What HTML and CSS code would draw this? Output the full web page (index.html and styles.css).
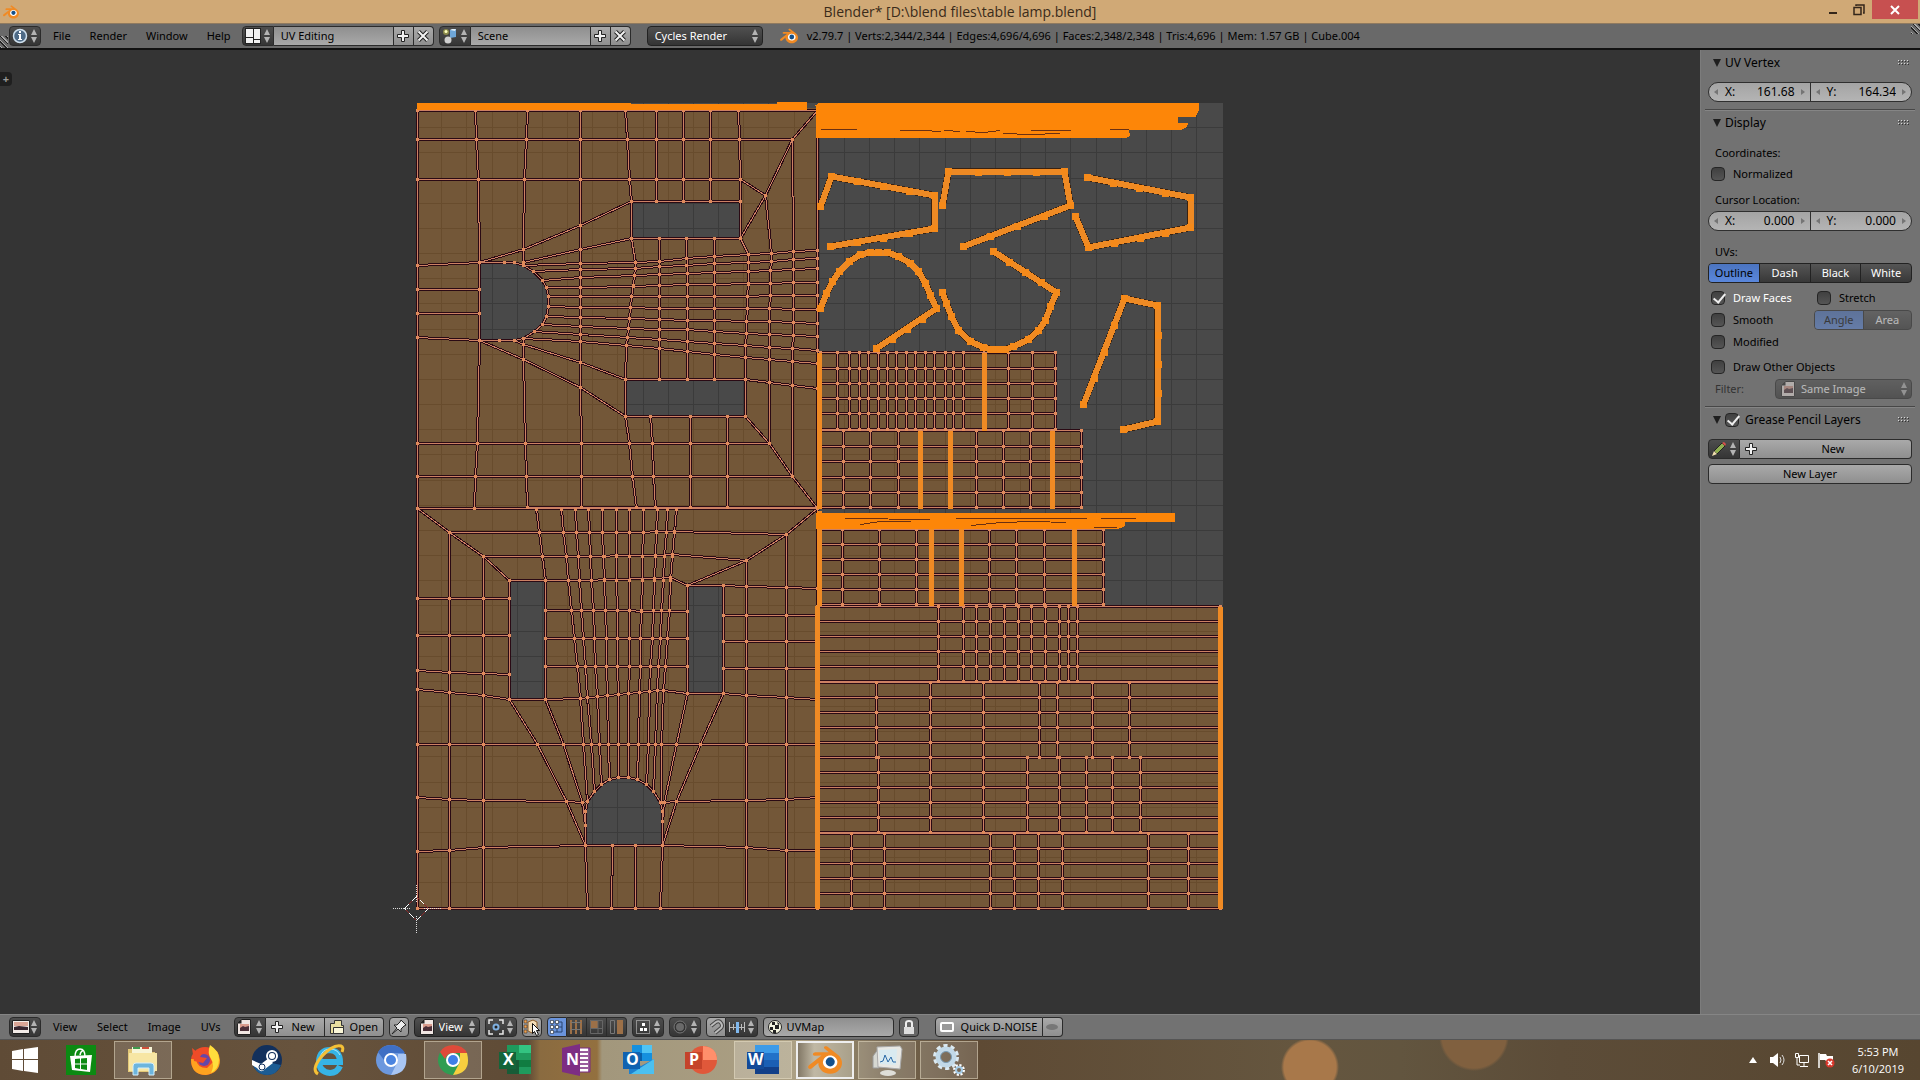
FILE: index.html
```html
<!DOCTYPE html>
<html lang="en">
<head>
  <meta charset="UTF-8">
  <title>Blender* [D:\blend files\table lamp.blend]</title>
  <meta name="viewport" content="width=device-width, initial-scale=1.0">
  <link rel="stylesheet" href="styles.css">
</head>
<body>

  <!-- Shared icons -->
  <svg class="defs" aria-hidden="true">
    <symbol id="blender" viewBox="0 0 24 24">
      <circle cx="15.700" cy="13.500" r="6" fill="#fff"/>
      <circle cx="15.700" cy="13.300" r="3.200" fill="#15508a"/>
      <path fill="#f08a24" d="M7.350 14.831c.006.314.106.922.256 1.398a7.372 7.372 0 0 0 1.593 2.757 8.227 8.227 0 0 0 2.787 2.001 8.947 8.947 0 0 0 3.660.760 8.964 8.964 0 0 0 3.657-.772 8.285 8.285 0 0 0 2.785-2.010 7.428 7.428 0 0 0 1.592-2.762 6.964 6.964 0 0 0 .250-3.074 7.123 7.123 0 0 0-1.016-2.779 7.764 7.764 0 0 0-1.852-2.043L13.566 2.550c-.492-.378-1.319-.376-1.860.002-.547.382-.609 1.015-.123 1.415l3.126 2.543-9.530.010c-.788.001-1.545.518-1.695 1.172-.154.665.380 1.217 1.200 1.220l4.830-.010-8.620 6.617c-.813.622-1.075 1.658-.563 2.315.520.667 1.625.668 2.447.004L7.414 14s-.069.520-.063.831zm12.090 1.741c-.970.988-2.326 1.548-3.795 1.550-1.470.004-2.827-.552-3.797-1.538a4.510 4.510 0 0 1-1.036-1.622 4.282 4.282 0 0 1 .282-3.519 4.702 4.702 0 0 1 1.153-1.371c.942-.768 2.141-1.183 3.396-1.185 1.256-.002 2.455.410 3.398 1.175.480.391.870.854 1.152 1.367a4.280 4.280 0 0 1 .522 1.706 4.236 4.236 0 0 1-.239 1.811 4.540 4.540 0 0 1-1.035 1.626"/>
    </symbol>
    <symbol id="updown" viewBox="0 0 8 16">
      <path fill="#b4b4b4" d="M4 1 L7 7 H1Z M4 15 L1 9 H7Z"/>
    </symbol>
    <symbol id="plus" viewBox="0 0 14 14">
      <path fill="#f2f2f2" stroke="#222" d="M5.500 1.500h3v4h4v3h-4v4h-3v-4h-4v-3h4z"/>
    </symbol>
    <symbol id="cross" viewBox="0 0 14 14">
      <path fill="none" stroke="#222" stroke-width="4" d="M2.500 2.500l9 9m0-9l-9 9"/>
      <path fill="none" stroke="#f2f2f2" stroke-width="2" d="M2.500 2.500l9 9m0-9l-9 9"/>
    </symbol>
    <symbol id="image" viewBox="0 0 14 16">
      <path fill="#f0e6e2" stroke="#222" d="M4.500 .5h9v15h-13v-11z"/>
      <path fill="#d99b8c" d="M3 5h9v4H3z"/>
      <path fill="#4b2f38" d="M3 9l3-2 2 1 4-1v5H3z"/>
      <path fill="#222" d="M.5 4.500h4v-4z"/>
    </symbol>
    <symbol id="grip" viewBox="0 0 12 6">
      <path stroke="#d8d8d8" stroke-dasharray="1 2" d="M0 .5h12M0 3.500h12"/>
      <path stroke="#333" stroke-dasharray="1 2" d="M1 1.500h11M1 4.500h11"/>
    </symbol>
  </svg>

  <header class="titlebar">
    <svg class="title-icon"><use href="#blender"/></svg>
    <h1>Blender* [D:\blend files\table lamp.blend]</h1>
    <div class="window-buttons">
      <button aria-label="Minimize"><svg width="12" height="12"><path stroke="#33261a" stroke-width="2" d="M2 9h8"/></svg></button>
      <button aria-label="Restore"><svg width="12" height="12"><path fill="none" stroke="#33261a" stroke-width="1.500" d="M3 2V1h8v8h-1M1 3.500h7v7H1z"/></svg></button>
      <button class="close" aria-label="Close"><svg width="10" height="10"><path stroke="#fff" stroke-width="2" d="M1 1l8 8m0-8l-8 8"/></svg></button>
    </div>
  </header>

  <nav class="bar top-bar">
    <button class="menu-btn dark" aria-label="Editor type">
      <svg width="16" height="16"><circle cx="8" cy="8" r="6.500" fill="#4e6a86" stroke="#cfe0ee" stroke-width="1.500"/><path fill="#fff" d="M7 3h2v2H7zM6 6h3v5h1v1H6v-1h1V7H6z"/></svg>
      <svg class="ud"><use href="#updown"/></svg>
    </button>
    <div class="menus">
      <a href="#file">File</a><a href="#render">Render</a><a href="#window">Window</a><a href="#help">Help</a>
    </div>
    <div class="group">
      <button class="menu-btn dark" aria-label="Screen layout">
        <svg width="16" height="16"><path fill="#222" d="M0 0h16v16H0z"/><path fill="#f2f2f2" d="M1 1h7v8H1zM9 1h6v10H9zM1 10h7v5H1zM9 12h6v3H9z"/></svg>
        <svg class="ud"><use href="#updown"/></svg>
      </button>
      <input class="name" aria-label="Screen" value="UV Editing">
      <button class="sq" aria-label="Add screen"><svg class="i14"><use href="#plus"/></svg></button>
      <button class="sq" aria-label="Delete screen"><svg class="i14"><use href="#cross"/></svg></button>
    </div>
    <div class="group">
      <button class="menu-btn dark" aria-label="Browse scene">
        <svg width="16" height="16"><path fill="#6ea6d8" d="M8 2l6-1v8l-6 1z"/><path fill="#dcecf8" d="M8 2l2-1h4l-1 2z"/><circle cx="4" cy="4" r="3" fill="#8b8a4a"/><circle cx="4" cy="3.500" r="1.500" fill="#ffffc0"/><circle cx="6" cy="12" r="3.500" fill="#d0d0d0"/></svg>
        <svg class="ud"><use href="#updown"/></svg>
      </button>
      <input class="name" aria-label="Scene" value="Scene">
      <button class="sq" aria-label="Add scene"><svg class="i14"><use href="#plus"/></svg></button>
      <button class="sq" aria-label="Delete scene"><svg class="i14"><use href="#cross"/></svg></button>
    </div>
    <div class="drop engine">
      <select aria-label="Render engine"><option>Cycles Render</option></select>
      <svg class="ud"><use href="#updown"/></svg>
    </div>
    <p class="stats"><svg class="i18"><use href="#blender"/></svg>v2.79.7 | Verts:2,344/2,344 | Edges:4,696/4,696 | Faces:2,348/2,348 | Tris:4,696 | Mem: 1.57 GB | Cube.004</p>
  </nav>

  <main class="workspace">
    <section class="canvas" aria-label="UV editor">
      <button class="expand" aria-label="Show tool shelf">+</button>
      <svg id="uv" class="uv"></svg>
    </section>

    <aside class="sidebar">
      <section class="panel">
        <h2><span class="tri"></span>UV Vertex<svg class="grip"><use href="#grip"/></svg></h2>
        <div class="numbers">
          <div class="num"><label for="vx">X:</label><input id="vx" value="161.68"></div>
          <div class="num"><label for="vy">Y:</label><input id="vy" value="164.34"></div>
        </div>
      </section>

      <section class="panel">
        <h2><span class="tri"></span>Display<svg class="grip"><use href="#grip"/></svg></h2>
        <p class="caption first">Coordinates:</p>
        <div class="row"><label class="check"><input type="checkbox">Normalized</label></div>
        <p class="caption">Cursor Location:</p>
        <div class="numbers tight">
          <div class="num"><label for="cx">X:</label><input id="cx" value="0.000"></div>
          <div class="num"><label for="cy">Y:</label><input id="cy" value="0.000"></div>
        </div>
        <p class="caption uvs">UVs:</p>
        <div class="toggle">
          <button class="on">Outline</button><button>Dash</button><button>Black</button><button>White</button>
        </div>
        <div class="checks">
          <label class="check lit"><input type="checkbox" checked>Draw Faces</label>
          <label class="check"><input type="checkbox">Stretch</label>
          <label class="check"><input type="checkbox">Smooth</label>
          <div class="toggle faded"><button class="on" disabled>Angle</button><button disabled>Area</button></div>
          <label class="check"><input type="checkbox">Modified</label>
        </div>
        <div class="row other"><label class="check"><input type="checkbox">Draw Other Objects</label></div>
        <div class="filter">
          <label for="filter">Filter:</label>
          <div class="drop faded">
            <svg width="14" height="16"><use href="#image"/></svg>
            <select id="filter" disabled><option>Same Image</option></select>
            <svg class="ud"><use href="#updown"/></svg>
          </div>
        </div>
      </section>

      <section class="panel">
        <h2><span class="tri"></span><input type="checkbox" checked id="grease"><label for="grease">Grease Pencil Layers</label><svg class="grip"><use href="#grip"/></svg></h2>
        <div class="group">
          <button class="menu-btn dark" aria-label="Browse grease pencil">
            <svg width="16" height="16"><path fill="#8fae50" stroke="#222" d="M3 10L11 2l3 3-8 8z"/><path fill="#d8524a" d="M11 2l2-1 2 2-1 2z"/><path fill="#f3e0b0" d="M1 15l2-5 3 3z"/></svg>
            <svg class="ud"><use href="#updown"/></svg>
          </button>
          <button class="wide"><svg class="i14"><use href="#plus"/></svg><span>New</span></button>
        </div>
        <button class="layer">New Layer</button>
      </section>
    </aside>
  </main>

  <nav class="bar bottom-bar">
    <button class="menu-btn dark" aria-label="Editor type">
      <svg width="18" height="16"><path fill="#f3ece8" stroke="#222" d="M.5 1.500h17v13H.5z"/><path fill="#dba596" d="M2 3h14v4H2z"/><path fill="#3a2730" d="M2 8l5-1 9 1v3H2z"/></svg>
      <svg class="ud"><use href="#updown"/></svg>
    </button>
    <div class="menus">
      <a href="#view">View</a><a href="#select">Select</a><a href="#image-menu">Image</a><a href="#uvs">UVs</a>
    </div>
    <div class="group">
      <button class="menu-btn dark" aria-label="Browse image"><svg width="14" height="16"><use href="#image"/></svg><svg class="ud"><use href="#updown"/></svg></button>
      <button class="new"><svg class="i14"><use href="#plus"/></svg>New</button>
      <button class="open"><svg width="16" height="16"><path fill="#e9dfa0" stroke="#333" d="M1.500 4.500h4v-3h7v5h2v8h-13z"/><path fill="#fbf7d8" stroke="#333" d="M4.500 8.500h10v6h-10z"/></svg>Open</button>
    </div>
    <button class="sq alone" aria-label="Pin"><svg width="16" height="16"><path fill="#eee" stroke="#222" d="M10 1l5 5-2 1-3 3v3l-3-3-6 5 5-6-3-3h3l3-3z"/></svg></button>
    <div class="drop view">
      <svg width="14" height="16"><use href="#image"/></svg>
      <select aria-label="Mode"><option>View</option></select>
      <svg class="ud"><use href="#updown"/></svg>
    </div>
    <button class="menu-btn dark" aria-label="Pivot"><svg width="16" height="16"><path fill="none" stroke="#e8e8e8" stroke-width="1.500" d="M1 5V1h4M11 1h4v4M15 11v4h-4M5 15H1v-4"/><circle cx="8" cy="8" r="2.500" fill="#222" stroke="#7fb0e0" stroke-width="2"/></svg><svg class="ud"><use href="#updown"/></svg></button>
    <button class="sq alone" aria-label="Sync selection"><svg width="18" height="18"><path fill="#f3ddb8" stroke="#8a5a28" d="M5 4l5-2 4 2v9l-5 2-4-2z"/><path fill="#f0a050" stroke="#222" stroke-width=".5" d="M1 2h3v3H1zM1 7h3v3H1zM1 12h3v3H1z"/><path fill="#fff" stroke="#111" d="M9.500 5.500v10l2-2 2 4 2-1-2-4h3z"/></svg></button>
    <div class="group modes">
      <button class="sq on" aria-label="Vertex"><svg width="16" height="16"><path fill="none" stroke="#26426e" d="M3 3h10v10H3zM8 3v10M3 8h10"/><path fill="#fff" stroke="#111" stroke-width=".5" d="M1.500 1.500h3v3h-3zM6.500 1.500h3v3h-3zM6.500 6.500h3v3h-3zM1.500 6.500h3v3h-3zM1.500 11.500h3v3h-3z"/></svg></button>
      <button class="sq dark" aria-label="Edge"><svg width="16" height="16"><path fill="none" stroke="#9c7048" stroke-width="2" d="M3 1v14M8 1v14M13 1v14"/><path stroke="#777" d="M3 3.500h10M3 10.500h10"/></svg></button>
      <button class="sq dark" aria-label="Face"><svg width="16" height="16"><path fill="#9c7048" d="M2 1h8v8H2z"/><path fill="none" stroke="#666" d="M2.500 1.500h12v13h-12zM10 1v13M2 9.500h12"/></svg></button>
      <button class="sq dark" aria-label="Island"><svg width="16" height="16"><path fill="#9c7048" d="M9 1h6v14H9z"/><path fill="none" stroke="#777" d="M2.500 1.500h4v13h-4z"/></svg></button>
    </div>
    <button class="menu-btn dark" aria-label="Sticky selection"><svg width="16" height="16"><path fill="none" stroke="#ddd" stroke-dasharray="1 1" d="M1.500 1.500h13v13h-13z"/><path fill="#fff" d="M7 4h3v3H7zM5 9h3v3H5zM9 9h3v3H9z"/></svg><svg class="ud"><use href="#updown"/></svg></button>
    <button class="menu-btn dark" aria-label="Proportional editing"><svg width="16" height="16"><circle cx="8" cy="8" r="5" fill="#6a6a6a" stroke="#333" stroke-width="2"/><circle cx="8" cy="8" r="6" fill="none" stroke="#777"/></svg><svg class="ud"><use href="#updown"/></svg></button>
    <div class="group">
      <button class="sq" aria-label="Snap"><svg width="16" height="16"><path fill="none" stroke="#444" stroke-width="4" d="M3 7l5-4q3-2 5 1t0 5l-6 5"/><path fill="none" stroke="#bbb" stroke-width="2" d="M3 7l5-4q3-2 5 1t0 5l-6 5"/></svg></button>
      <button class="menu-btn dark" aria-label="Snap element"><svg width="18" height="16"><path stroke="#bbb" d="M1.500 3v10M5.500 5v6M13.500 5v6M16.500 3v10M1 8.500h16"/><path fill="#7fb8ee" d="M8 3h3v11H8z"/></svg><svg class="ud"><use href="#updown"/></svg></button>
    </div>
    <div class="uvmap">
      <svg width="16" height="16"><circle cx="8" cy="8" r="6.500" fill="#f5f5e0" stroke="#222"/><path fill="#222" d="M5 3h3v3H5zM8 6h4v4H8zM3 8h3v3H3zM6 11h3v3H6zM10 3l3 2-2 1z"/></svg>
      <input aria-label="UV map" value="UVMap">
    </div>
    <button class="sq alone lock" aria-label="Lock"><svg width="14" height="16"><path fill="none" stroke="#eee" stroke-width="2" d="M4 8V4q0-2 3-2t3 2v4"/><path fill="#ddd" d="M2 8h10v7H2z"/></svg></button>
    <div class="group denoise">
      <button class="quick"><svg width="16" height="16"><rect x="2" y="4" width="12" height="8" rx="1" fill="#999" stroke="#fff" stroke-width="2"/></svg>Quick D-NOISE</button>
      <button class="sq" aria-label="Options"><svg width="16" height="12"><ellipse cx="8" cy="6" rx="6" ry="3" fill="#777"/></svg></button>
    </div>
  </nav>

  <footer class="taskbar">
    <button class="task start" aria-label="Start"><svg width="26" height="26"><path fill="#fff" d="M0 4l11-2v10H0zM12 2l14-2v12H12zM0 13h11v11L0 22zM12 13h14v13l-14-2z"/></svg></button>
    <button class="task" aria-label="Store"><svg width="30" height="30"><path fill="#0c8a12" d="M0 0h30v30H0z"/><path fill="none" stroke="#fff" stroke-width="1.500" d="M9 12q0-8 5-8t5 8M14 10q1-5 4-4"/><path fill="#fff" d="M4 11l22-1-2 17-18-2z"/><path fill="#0c8a12" d="M9 14l5-.5v5H9zM15 13.500l6-.5v5.500h-6zM9 19.500h5v4.500l-5-1zM15 19.500h6v5.500l-6-1z"/></svg></button>
    <button class="task open-task" aria-label="File Explorer"><svg width="32" height="32"><path fill="#e3c878" d="M1 5h9l2 3h16v20H1z"/><path fill="#f8f5d8" d="M5 3h20v6H5z"/><path stroke="#d0503a" stroke-width="2" d="M15 4h7"/><path stroke="#3f9a4d" stroke-width="2" d="M6 4h7"/><path fill="#f7e6a4" d="M2 9h28v18H2z"/><path fill="#6db5dd" stroke="#d5effb" d="M6 31V22q0-3 3-3h15q3 0 3 3v9h-5v-7H11v7z"/></svg></button>
    <button class="task" aria-label="Firefox"><svg width="32" height="32"><circle cx="16" cy="17" r="14" fill="#ef4b28"/><path fill="#ffa21f" d="M2 15q0 16 15 16 14-2 14-15-1-10-10-14 2 4 0 7l4 8-7 7q-10 0-11-9z"/><path fill="#ffde3c" d="M21 1q9 6 9 14 0 10-8 14 4-8 0-14-4-6-1-14z"/><circle cx="15" cy="16" r="6" fill="#6547a8"/><path fill="#ef4b28" d="M3 4l5 4h6l-3 5 7 1-4 5-9-2z"/></svg></button>
    <button class="task" aria-label="Steam"><svg width="32" height="32"><circle cx="16" cy="16" r="15" fill="#12305c"/><path fill="#1c5c93" d="M2 21q14-4 28 0-4 10-14 10T2 21z"/><path fill="#fff" d="M1 16l9 4 8-6 4 5-8 6q-4 5-8-1l-5-3z"/><circle cx="21" cy="12" r="6" fill="#fff"/><circle cx="21" cy="12" r="4" fill="#12305c"/><circle cx="21" cy="12" r="3" fill="#fff"/><circle cx="11" cy="23" r="3" fill="none" stroke="#12305c"/></svg></button>
    <button class="task" aria-label="Internet Explorer"><svg width="32" height="32"><path fill="none" stroke="#36b4e5" stroke-width="6" d="M27 22q-3 7-10 7-11-1-11-12Q7 6 17 6q10 1 10 12H9"/><path fill="none" stroke="#b5e8fa" stroke-width="1" d="M7 14q2-9 10-9 7 0 10 6"/><path fill="none" stroke="#f5c036" stroke-width="3" d="M5 30Q-2 26 8 13 20 0 28 2q3 1 1 6"/></svg></button>
    <button class="task" aria-label="Chromium"><svg width="32" height="32"><circle cx="16" cy="16" r="15" fill="#6c98de"/><path fill="#3f6fc4" d="M3 8q4-7 13-7 9 0 14 8H16q-6 0-7 7z"/><path fill="#a9c6f3" d="M31 10q3 20-15 21l7-14V10z"/><circle cx="16" cy="16" r="7" fill="#fff"/><circle cx="16" cy="16" r="5" fill="#4a84e0"/></svg></button>
    <button class="task open-task" aria-label="Chrome"><svg width="32" height="32"><circle cx="16" cy="16" r="15" fill="#2f9d52"/><path fill="#df4a3a" d="M3 8q4-7 13-7 10 0 14 8H16q-6 0-8 6z"/><path fill="#f8cf3f" d="M30 9q5 20-14 22l7-13V9z"/><circle cx="16" cy="16" r="7" fill="#fff"/><circle cx="16" cy="16" r="5" fill="#3f7fe8"/></svg></button>
    <button class="task" aria-label="Excel"><svg width="34" height="30"><path fill="#1f9a5d" d="M9 0h24v29H9z"/><path fill="#33c481" d="M21 0h12v8H21z"/><path fill="#185c37" d="M9 15h12v14H9z"/><path fill="#107c41" d="M21 15h12v7H21z"/><path fill="#14643a" d="M1 7h17v17H1z"/><text x="5" y="20">X</text></svg></button>
    <button class="task" aria-label="OneNote"><svg width="32" height="32"><path fill="#fff" stroke="#7a2a80" d="M18 4h11v24H18z"/><path stroke="#7a2a80" stroke-width="1.500" d="M18 8h9M18 12h9M18 16h9M18 20h9M18 24h9M28 4v24"/><path fill="#7d2d83" d="M1 4l18-4v32L1 28z"/><text x="5" y="21">N</text></svg></button>
    <button class="task" aria-label="Outlook"><svg width="34" height="30"><path fill="#1590df" d="M10 0h20v16H10z"/><path fill="#50c4f4" d="M20 0h10v8H20z"/><path fill="#0a5ea8" d="M10 8h10v8H10z"/><path fill="#1d80cf" d="M7 14l12 7 13-7v15H7z"/><path fill="#4cc0f0" d="M32 14v15H9z"/><path fill="#0f62b0" d="M1 7h17v17H1z"/><text x="4" y="20">O</text></svg></button>
    <button class="task" aria-label="PowerPoint"><svg width="34" height="32"><circle cx="19" cy="16" r="14" fill="#e0583a"/><path fill="#ff8f6b" d="M19 2q14 1 14 14H19z"/><path fill="#c5432a" d="M1 8h17v17H1z"/><text x="5" y="21">P</text></svg></button>
    <button class="task open-task light" aria-label="Word"><svg width="34" height="30"><path fill="#3c9be8" d="M9 0h24v8H9z"/><path fill="#2272c8" d="M9 8h24v7H9z"/><path fill="#1b5fb4" d="M9 15h24v7H9z"/><path fill="#123f88" d="M9 22h24v7H9z"/><path fill="#134a98" d="M1 7h17v17H1z"/><text x="2" y="20">W</text></svg></button>
    <button class="task open-task active" aria-label="Blender"><svg width="36" height="34"><use href="#blender"/></svg></button>
    <button class="task open-task" aria-label="Task Manager"><svg width="32" height="32"><path fill="#d6d8d2" stroke="#999" d="M2 12l6-8v20H2z"/><path fill="#e8e8e4" stroke="#aaa" d="M6 3l23-1 2 3-2 20-22-2z"/><path fill="#d9eaf0" d="M8 6l18-1-1 16-16-1z"/><path fill="none" stroke="#2b6aa8" d="M9 18l3-1 2-6 3 7 3-5 2 5h3"/><ellipse cx="17" cy="29" rx="8" ry="3" fill="#deded8"/></svg></button>
    <button class="task open-task" aria-label="Services"><svg width="32" height="34"><circle cx="13" cy="14" r="11" fill="none" stroke="#dceaf2" stroke-width="4" stroke-dasharray="4 3"/><circle cx="13" cy="14" r="8" fill="none" stroke="#c2d9e8" stroke-width="5"/><circle cx="13" cy="14" r="5.500" fill="none" stroke="#7a9cb5"/><circle cx="26" cy="27" r="4.500" fill="none" stroke="#fff" stroke-width="3" stroke-dasharray="2 1.500"/><circle cx="26" cy="27" r="3" fill="none" stroke="#a5cbe6" stroke-width="2"/></svg></button>

    <div class="tray">
      <svg width="8" height="6"><path fill="#fff" d="M4 0l4 6H0z"/></svg>
      <svg width="16" height="16"><path fill="#fff" d="M0 5h3l5-4v14l-5-4H0z"/><path fill="none" stroke="#ddd" d="M10 5q2 3 0 6M12 3q4 5 0 10"/></svg>
      <svg width="16" height="16"><path fill="none" stroke="#fff" d="M5.500 3.500h9v7h-9zM10 11v3M6 14.500h8M3 6v7h3"/><path fill="none" stroke="#fff" d="M1.500 1.500h3v4h-3z"/></svg>
      <svg width="18" height="16"><path stroke="#fff" stroke-width="1.500" d="M1 1v15"/><path fill="#fff" d="M2 2h6l1 2h6v5H8L7 8H2z"/><circle cx="12" cy="11" r="4.500" fill="#d8382c"/><path stroke="#fff" stroke-width="1.500" d="M10 9l4 4m0-4l-4 4"/></svg>
      <div class="clock"><time>5:53 PM</time><span>6/10/2019</span></div>
    </div>
  </footer>

  <script src="uv.js"></script>
</body>
</html>
```

FILE: styles.css
```css
* { box-sizing: border-box; }

body {
  margin: 0;
  height: 100vh;
  display: flex;
  flex-direction: column;
  overflow: hidden;
  font-family: "Noto Sans", "Open Sans", sans-serif;
  font-size: 11px;
  line-height: 20px;
  color: #000;
  background: #333;
}

button, input, select {
  font: inherit;
  color: inherit;
  margin: 0;
  padding: 0;
  border: none;
  background: none;
}

svg { display: block; flex: none; }
p, h1, h2 { margin: 0; font-weight: normal; }

.defs { position: absolute; width: 0; height: 0; }
.ud { width: 8px; height: 16px; }
.i14 { width: 14px; height: 14px; }
.i18 { width: 18px; height: 18px; }

/* Window title */
.titlebar {
  height: 24px;
  flex: none;
  display: grid;
  grid-template-columns: 1fr auto 1fr;
  align-items: center;
  background: #d0a976;
  border-bottom: 1px solid #8f7a60;
  color: #3a2b1a;
}

.titlebar h1 { font-family: "Open Sans", sans-serif; font-size: 14px; }
.title-icon { width: 16px; height: 16px; margin-left: 3px; }

.window-buttons {
  display: flex;
  justify-self: end;
  align-self: start;
  padding-right: 2px;
}

.window-buttons button {
  width: 26px;
  height: 19px;
  display: flex;
  align-items: center;
  justify-content: center;
}

.window-buttons .close { width: 46px; background: #c75050; }

/* Blender header bars */
.bar {
  height: 26px;
  flex: none;
  display: flex;
  align-items: center;
  gap: 5px;
  padding: 0 9px;
  background: #696969;
  border-bottom: 2px solid #111;
}

.top-bar {
  background:
    repeating-linear-gradient(45deg, #222 0 1px, #aaa 1px 2px, #696969 2px 4px) left bottom / 8px 12px no-repeat,
    repeating-linear-gradient(45deg, #222 0 1px, #aaa 1px 2px, #696969 2px 4px) right top / 9px 10px no-repeat,
    #696969;
}

.bottom-bar {
  background: #727272;
  border-top: 1px solid #858585;
  border-bottom: 1px solid #555;
}

.menus { display: flex; gap: 20px; padding: 0 8px 0 7px; }
.top-bar .menus { gap: 19px; padding-right: 6px; }
.menus a { color: #000; text-decoration: none; }

.group { display: flex; }

.group > *,
.menu-btn,
.alone,
.layer {
  height: 20px;
  border: 1px solid #2b2b2b;
  background: linear-gradient(#a9a9a9, #8f8f8f);
}

.group > * + * { border-left: none; }
.group > :first-child { border-radius: 4px 0 0 4px; }
.group > :last-child { border-radius: 0 4px 4px 0; }
.menu-btn, .alone, .layer { border-radius: 4px; }

.menu-btn {
  width: 32px;
  display: flex;
  align-items: center;
  justify-content: space-between;
  padding: 0 2px;
}

.group > .dark, .dark { background: linear-gradient(#4e4e4e, #353535); color: #fff; }

.name { width: 120px; padding: 0 7px; }
.group > .name { background: linear-gradient(#8f8f8f, #a9a9a9); }

.sq {
  width: 20px;
  display: flex;
  align-items: center;
  justify-content: center;
}

.drop {
  height: 20px;
  display: flex;
  align-items: center;
  padding: 0 3px 0 7px;
  border: 1px solid #222;
  border-radius: 4px;
  background: linear-gradient(#505050, #343434);
  color: #fff;
}

.drop select { appearance: none; flex: 1; min-width: 0; opacity: 1; }
.engine { width: 116px; margin-left: 11px; }
.stats { display: flex; align-items: center; gap: 9px; margin-left: 12px; white-space: nowrap; }

/* Bottom bar widgets */
.new, .open {
  display: flex;
  align-items: center;
  gap: 8px;
  padding: 0 4px;
}

.new { width: 59px; }
.open { width: 59px; gap: 5px; }
.view { width: 66px; padding-left: 5px; gap: 5px; }
.group > .on { background: #6a94dc; }
.lock { background: #666; }

.uvmap {
  width: 131px;
  height: 20px;
  display: flex;
  align-items: center;
  gap: 4px;
  padding-left: 3px;
  border: 1px solid #2b2b2b;
  border-radius: 4px;
  background: linear-gradient(#8f8f8f, #a9a9a9);
}

.uvmap input { width: 100px; }
.denoise { margin-left: 11px; }
.quick { width: 108px; display: flex; align-items: center; gap: 6px; padding: 0 3px; white-space: nowrap; }

/* Canvas */
.workspace { flex: 1; min-height: 0; display: flex; }

.canvas {
  flex: 1;
  min-width: 0;
  position: relative;
  background: #343434;
  overflow: hidden;
}

.uv { width: 100%; height: 100%; }

.expand {
  position: absolute;
  left: 0;
  top: 22px;
  width: 12px;
  height: 14px;
  border-radius: 0 4px 4px 0;
  background: #1f1f1f;
  color: #999;
  font-weight: bold;
  line-height: 12px;
}

.uv-bg { fill: #494949; }
.uv-grid { stroke: #3b3b3b; fill: none; }
.uv-face { fill: #ff8500; fill-opacity: .23; }
.uv-halo { stroke: #2a0a14; stroke-width: 3; fill: none; }
.uv-line { stroke: #cc8064; fill: none; }
.uv-dot { fill: #e08a5c; }
.uv-solid { fill: #fd8608; }
.uv-knot { fill: #f58a1a; }
.uv-edge { fill: none; stroke: #3a2210; stroke-width: 7; }
.uv-strip { fill: none; stroke: #ee8a24; stroke-width: 6; }
.uv-bar { fill: none; stroke: #ef8a24; stroke-width: 5; }
.uv-scratch { fill: none; stroke: #6b3012; }
.uv, .uv * { shape-rendering: crispEdges; }

/* Sidebar */
.sidebar {
  width: 220px;
  flex: none;
  padding-top: 1px;
  background: #727272;
  border-left: 1px solid #7c7c7c;
}

.panel { padding: 0 8px 7px 7px; }

.panel:not(:last-child)::after {
  content: "";
  display: block;
  margin: 7px -3px -7px;
  border-top: 1px solid #474747;
  border-bottom: 1px solid #858585;
}

.panel h2 {
  height: 24px;
  display: flex;
  align-items: center;
  gap: 4px;
  padding: 0 2px 0 5px;
  margin-bottom: 7px;
  font-size: 12px;
}

.panel h2 label { margin-left: 2px; }

.tri {
  border: 4px solid transparent;
  border-top: 8px solid #1e1e1e;
  border-bottom: none;
}

.grip { width: 12px; height: 6px; margin-left: auto; }

.numbers {
  display: flex;
  height: 20px;
  border: 1px solid #2f2f2f;
  border-radius: 10px;
  background: linear-gradient(#a4a4a4, #b4b4b4);
  overflow: hidden;
  font-size: 12px;
  line-height: 18px;
}

.num {
  flex: 1;
  min-width: 0;
  display: flex;
  align-items: center;
  padding: 0 5px;
}

.num + .num { border-left: 1px solid #2f2f2f; }

.num::before,
.num::after {
  content: "";
  border: 3px solid transparent;
  border-right: 4px solid #757575;
  border-left: none;
}

.num::after { border-left: 4px solid #757575; border-right: none; }
.num label { margin-left: 7px; }
.num input { flex: 1; min-width: 0; text-align: right; margin-right: 6px; }

.caption { padding-left: 7px; margin-top: 6px; }
.caption.first { margin-top: 8px; }
.uvs { margin-top: 11px; }
.row, .tight { margin-top: 1px; }

.check { display: flex; align-items: center; gap: 8px; padding-left: 3px; }
.lit { color: #fff; }

input[type="checkbox"] {
  appearance: none;
  flex: none;
  width: 14px;
  height: 14px;
  border: 1px solid #252525;
  border-radius: 4px;
  background: linear-gradient(#404040, #555);
}

input[type="checkbox"]:checked::before {
  content: "";
  display: block;
  width: 5px;
  height: 10px;
  margin: -1px 0 0 4px;
  border: solid #eee;
  border-width: 0 2px 2px 0;
  transform: rotate(40deg);
}

.toggle {
  display: flex;
  height: 20px;
  margin-top: 1px;
  border: 1px solid #222;
  border-radius: 4px;
  overflow: hidden;
  color: #fff;
  line-height: 18px;
  background: linear-gradient(#555, #383838);
}

.toggle button { flex: 1; }
.toggle button + button { border-left: 1px solid #222; }
.toggle .on { background: linear-gradient(#4b74c0, #5a87dc); color: #000; }

.checks {
  display: grid;
  grid-template-columns: 106px 1fr;
  gap: 2px 0;
  margin-top: 5px;
}

.checks .toggle { margin-top: 0; }
.faded { opacity: .5; }
.other { margin-top: 5px; }
.filter { display: flex; justify-content: space-between; padding-left: 7px; margin-top: 2px; }
.filter > label { color: #333; }
.filter .drop { width: 137px; padding-left: 5px; gap: 6px; }

.wide { flex: 1; display: flex; align-items: center; padding-left: 4px; }
.wide span { flex: 1; padding-right: 3px; }
.layer { width: 100%; margin-top: 5px; line-height: 18px; }

/* Windows taskbar */
.taskbar {
  height: 40px;
  flex: none;
  display: flex;
  align-items: center;
  gap: 4px;
  background:
    radial-gradient(circle at 1310px 27px, #a8784a 0 26px, transparent 29px),
    radial-gradient(ellipse at 1456px -4px, #93693f 0 20px, transparent 24px),
    radial-gradient(circle at 1474px -4px, #80603f 0 32px, transparent 35px),
    linear-gradient(90deg, #5f4b36 0, #67533d 300px, #5f4b36 528px, #8a6b40 540px, #93703f 597px, #a2977c 602px, #aca084 800px, #766750 890px, #5e4a34 980px, #65563f 1300px, #62553f 1400px, #5c4c38 1560px, #574630 100%);
}

.task {
  width: 58px;
  height: 38px;
  display: flex;
  align-items: center;
  justify-content: center;
}

.start { width: 48px; padding-left: 2px; }
.open-task { background: rgba(255, 255, 255, .15); border: 1px solid rgba(235, 225, 200, .5); }
.light { background: rgba(255, 255, 255, .2); }
.active { background: linear-gradient(90deg, #827866, #c0b8a4 30%, #a9a08a); border: 2px solid #eee; }
.task text { font: bold 16px "Open Sans", sans-serif; fill: #fff; }

.tray {
  flex: 1;
  display: flex;
  align-items: center;
  justify-content: flex-end;
  gap: 8px;
  padding-right: 16px;
  color: #fff;
}

.tray > svg:first-child { margin-right: 5px; }
.clock { display: flex; flex-direction: column; align-items: center; margin-left: 8px; font: 11px/17px "Open Sans", sans-serif; }
```

FILE: uv.js
```js
const NS = "http://www.w3.org/2000/svg";
const svg = document.getElementById("uv");

function add(tag, cls, attrs) {
  const el = document.createElementNS(NS, tag);
  el.setAttribute("class", cls);
  for (const k in attrs) el.setAttribute(k, attrs[k]);
  svg.appendChild(el);
  return el;
}

// Mesh coordinates are thirds of a pixel, counted from the tile's own origin
function parse(tile, text) {
  return text.trim().split(/\s+/).map(p => {
    const [x, y] = p.split(",").map(Number);
    return [Math.round(tile.x + x / 3) + 0.5, Math.round(tile.y + y / 3) + 0.5];
  });
}

const path = pts => "M" + pts.map(p => p.join(" ")).join("L");

const topLeft = { x: 400, y: 40 };
const bottomLeft = { x: 400, y: 440 };
const topRight = { x: 799.6, y: 39.6 };
const bottomRight = { x: 799.6, y: 440 };

// Background tile and its grid
add("rect", "uv-bg", { x: 417, y: 53, width: 806, height: 806 });
let grid = "";
for (let i = 1; i < 32; i++) {
  const s = Math.round(i * 25.17);
  grid += `M${416 + s}.5 53V859M417 ${52 + s}.5H1223`;
}
add("path", "uv-grid", { d: grid });

// Faces, with the holes cut out
const archTop = "238,517 313,517 343,517 370,525 400,544 427,569 439,592 445,619 445,649 439,679 427,703 403,724 370,745 343,751 298,751 238,751";
const archBottom = "556,1066 556,1006 556,964 562,934 583,904 604,883 628,868 655,862 685,862 712,868 739,883 760,904 781,937 787,964 787,994 787,1066";

function faces(tile, outlines) {
  const d = outlines.map(o => path(parse(tile, o)) + "Z").join("");
  add("path", "uv-face", { d, "fill-rule": "evenodd" });
}

faces(topLeft, ["52,50 1250,50 1250,1255 52,1255", "694,334 1021,334 1021,445 694,445", "676,868 1036,868 1036,979 676,979", archTop]);
faces(bottomLeft, ["52,55 1250,55 1250,1255 52,1255", "328,271 436,271 436,628 328,628", "862,286 970,286 970,610 862,610", archBottom]);
faces(topRight, ["52,787 766,787 766,1021 844,1021 844,1255 52,1255"]);
faces(bottomRight, ["52,115 910,115 910,346 1262,346 1262,1255 52,1255"]);

const lines = [];
const dots = [];

function poly(tile, text) {
  const pts = parse(tile, text);
  lines.push(path(pts));
  dots.push(...pts);
}

const across = (tile, y, xs) => poly(tile, xs.map(x => x + "," + y).join(" "));
const down = (tile, x, ys) => poly(tile, ys.map(y => x + "," + y).join(" "));

/* Upper left island */
[
  "52,60 226,60 382,60 541,60 676,60 769,60 850,60 931,60 1013,60 1250,60",
  "52,60 52,148 52,268 52,525 52,598 52,670 52,742 52,1060 52,1159 52,1255",
  "52,148 229,148 379,148 541,148 682,148 769,148 850,148 931,148 1016,148 1175,148",
  "52,268 235,268 373,268 541,268 688,268 769,268 850,268 931,268 1019,268 1096,316",
  "694,445 694,334 769,334 850,334 931,334 1021,334 1021,445",
  "694,445 778,445 859,445 943,445 1021,445",
  "238,517 370,478 541,406 694,334",
  "370,517 541,478 694,445",
  "1250,60 1175,148 1096,316 1021,445 1045,493",
  "226,60 229,148 235,268 238,517 238,598 238,670 238,751 232,1060 226,1159 223,1255",
  "382,60 379,148 373,268 370,478 370,525",
  "541,60 541,406 541,478 541,520 541,890 544,1060 544,1159 544,1251",
  "676,60 682,148 688,268 694,334",
  "694,445 706,517 706,535 703,556 700,586 694,619 691,652 688,685 685,715 682,742 679,766 676,868 676,979 688,1060 697,1159 709,1251",
  "769,60 769,334", "850,60 850,334", "931,60 931,334",
  "1013,60 1016,148 1019,268 1021,334",
  "1045,493 1045,583 1042,619 1042,655 1039,694 1039,730 1036,766 1036,868 1036,979 1108,1060 1177,1159 1250,1255",
  "1096,316 1114,490 1114,514 1111,541 1111,616 1108,655 1108,877 1108,1060",
  "1175,148 1180,484 1180,736 1177,775 1177,886 1177,1159",
  "778,445 778,868", "859,445 862,550 862,868", "943,445 943,868",
  "370,525 541,520 706,517 778,514 859,505 943,499 1045,493 1114,490 1180,484 1250,481",
  "400,544 541,538 706,535 778,529 859,526 943,520 1045,517 1114,514 1180,508 1250,505",
  "427,569 541,562 703,556 778,553 862,550 943,547 1045,544 1111,541 1180,538 1250,535",
  "439,592 541,590 700,587 778,586 862,583 943,583 1045,580 1111,580 1180,577 1250,577",
  "445,619 541,619 694,619 778,619 862,619 943,619 1042,619 1111,616 1180,616 1250,616",
  "445,649 541,652 691,652 778,655 862,655 943,655 1042,655 1108,655 1180,658 1250,658",
  "439,679 541,682 688,685 778,688 862,691 943,691 1039,694 1108,694 1180,697 1250,700",
  "427,703 541,709 685,715 778,718 862,718 943,724 1039,730 1108,733 1180,736 1250,739",
  "403,724 541,733 682,742 778,748 862,754 943,760 1036,766 1108,772 1177,775 1250,781",
  "370,745 541,754 679,766 778,775 862,784 943,793 1036,802 1108,808 1177,814 1250,820",
  "676,868 778,868 862,868 943,868 1036,868 1108,877 1177,886 1250,895",
  "343,751 370,763 541,817 676,868",
  "238,751 370,808 541,892 676,979",
  "676,979 751,979 871,979 982,979 1036,979",
  "52,525 238,517", "52,598 238,598", "52,670 238,670", "52,742 238,751",
  "370,745 370,808 376,1060 379,1159 382,1251",
  "751,979 757,1060 760,1159 766,1251",
  "871,979 871,1060 871,1159 871,1251", "982,979 982,1060 982,1159 982,1251",
  "382,1251 1250,1251",
  archTop
].forEach(l => poly(topLeft, l));
across(topLeft, 1060, [52, 232, 376, 544, 688, 757, 871, 982, 1108]);
across(topLeft, 1159, [52, 226, 379, 544, 697, 760, 871, 982, 1177]);
across(topLeft, 1255, [52, 223, 1250]);

/* Lower left island */
const levels = [58, 127, 199, 271, 361, 445, 529];
[
  [[484, 490, 499, 505, 514, 523, 532], "541,625 550,763 562,934"],
  [[526, 529, 535, 538, 544, 550, 556], "562,622 574,763 583,904"],
  [[565, 568, 571, 574, 580, 583, 586], "592,619 598,763 604,883"],
  [[607, 607, 610, 613, 616, 619, 619], "622,616 625,763 628,868"],
  [[649, 649, 649, 649, 652, 652, 652], "655,613 655,763 655,862"],
  [[688, 688, 688, 688, 688, 688, 688], "685,610 685,763 685,862"],
  [[730, 730, 727, 727, 724, 721, 721], "718,607 715,763 712,868"],
  [[772, 769, 766, 763, 760, 757, 751], "748,604 745,763 739,883"],
  [[802, 799, 793, 790, 784, 781, 775], "772,601 766,763 760,904"],
  [[829, 823, 817, 811, 808, 802, 796], "790,601 784,763 784,937"]
].forEach(([xs, tail]) => poly(bottomLeft, xs.map((x, i) => x + "," + levels[i]).join(" ") + " " + tail));
[
  "409,58 418,127 427,199 436,271 436,361 436,445 436,529 436,628 490,763 547,937 556,1006",
  "52,55 148,127 248,199 328,271 328,325 328,436 328,553 328,628 412,763 499,934 556,1066",
  "148,127 418,127 730,127 769,124 823,124 1159,133",
  "248,199 427,199 613,199 649,196 766,196 817,193 1039,211",
  "328,271 436,271 574,271 613,268 763,265 811,262 862,286 970,286 1039,289 1159,292 1250,295",
  "862,286 1039,211 1159,133 1250,55",
  "436,361 688,361 724,364 862,364", "436,445 862,445", "436,529 862,529",
  "328,628 436,628 541,625 655,613 772,601 790,601 862,610 970,610 1039,616 1159,622 1250,628",
  "862,286 862,364 862,445 862,529 862,610 829,763 793,937 787,994",
  "970,286 970,376 970,454 970,535 970,610 901,763 829,934 787,1066",
  "52,541 148,545 248,550 328,553", "52,598 148,607 248,616 328,628",
  "52,922 148,928 248,931 499,934 547,937 562,934",
  "784,937 793,937 829,934 1039,931 1159,928 1250,922",
  "52,1084 148,1079 248,1072 556,1066 637,1066 706,1066 787,1066 1039,1072 1159,1079 1250,1079",
  "556,1066 562,1255", "637,1066 634,1255", "706,1066 706,1255", "787,1066 781,1255",
  archBottom
].forEach(l => poly(bottomLeft, l));
across(bottomLeft, 325, [52, 148, 248, 328]);
across(bottomLeft, 436, [52, 148, 248, 328]);
for (const y of [376, 454, 535]) across(bottomLeft, y, [970, 1039, 1159, 1250]);
across(bottomLeft, 763, [52, 148, 248, 412, 490, 829, 901, 1039, 1159, 1250]);
across(bottomLeft, 1255, [52, 148, 248, 562, 634, 706, 781, 1039, 1159, 1250]);
down(bottomLeft, 52, [55, 1255]);
down(bottomLeft, 148, [127, 325, 436, 545, 607, 763, 928, 1079, 1255]);
down(bottomLeft, 248, [199, 325, 436, 550, 616, 763, 931, 1072, 1255]);
down(bottomLeft, 1039, [211, 289, 376, 454, 535, 616, 763, 931, 1072, 1255]);
down(bottomLeft, 1159, [133, 292, 376, 454, 535, 622, 763, 928, 1079, 1255]);
down(topLeft, 1250, [60, 1255]);
down(bottomLeft, 1250, [55, 1255]);

/* Rectangular islands, with a vertex at every crossing */
function table(tile, x1, x2, cols, rows) {
  for (const y of rows) across(tile, y, [x1, ...cols, x2]);
  for (const x of cols.concat(x2)) down(tile, x, [rows[0], rows[rows.length - 1]]);
}
table(topRight, 60, 766, [112, 148, 178, 205, 235, 262, 289, 319, 346, 376, 403, 436, 460, 490, 554, 625, 697], [787, 835, 880, 925, 970, 1018]);
table(topRight, 60, 844, [130, 211, 295, 361, 451, 529, 610, 691, 756], [1022, 1069, 1114, 1162, 1207, 1253]);
table(bottomRight, 60, 909, [127, 238, 349, 394, 484, 568, 649, 733, 823], [118, 163, 208, 253, 298, 343]);
table(bottomRight, 52, 1262, [415, 490, 529, 571, 613, 655, 694, 736, 778, 805, 832], [348, 394, 439, 484, 529, 574]);
table(bottomRight, 52, 1262, [229, 391, 550, 718, 772, 877, 988], [577, 622, 667, 712, 757, 802]);
table(bottomRight, 52, 1262, [235, 391, 550, 682, 778, 859, 937, 1021], [802, 847, 892, 937, 982, 1026]);
table(bottomRight, 52, 1262, [154, 253, 571, 643, 715, 787, 1045, 1165], [1029, 1075, 1120, 1165, 1210, 1255]);

add("path", "uv-halo", { d: lines.join("") });
add("path", "uv-line", { d: lines.join("") });
add("path", "uv-dot", { d: dots.map(([x, y]) => `M${x - 1.5} ${y - 1.5}h3v3h-3z`).join("") });

/* Thick seams */
const strokes = (tile, cls, list) => list.forEach(l => add("path", cls, { d: path(parse(tile, l)) }));
strokes(topRight, "uv-bar", ["57,787 57,1255", "554,787 554,1021", "361,1021 361,1255", "451,1021 451,1255", "756,1021 756,1255"]);
strokes(bottomRight, "uv-bar", ["57,60 57,346", "394,115 394,346", "484,115 484,346", "823,115 823,346", "53,346 53,1255", "1262,348 1262,1255"]);

/* Open strips, with a knot at every corner and along the long sides */
const strips = [
  "60,350 95,258 403,315 403,415 90,470",
  "428,345 445,245 793,245 812,345 490,470",
  "862,262 1170,322 1170,412 865,472 825,378",
  "62,655 80,610 98,575 118,543 147,513 180,494 210,487 235,486 262,488 295,500 330,519 354,545 375,580 390,615 408,655 230,775",
  "580,485 768,608 750,650 735,690 715,720 685,748 640,770 617,777 595,779 573,777 550,773 510,755 475,720 455,680 440,640 428,608",
  "850,943 972,625 1072,645 1072,995 970,1017"
];
strokes(topRight, "uv-edge", strips);
strokes(topRight, "uv-strip", strips);
let knots = "";
for (const s of strips) {
  const pts = parse(topRight, s);
  pts.forEach(([x, y], i) => {
    knots += `M${x - 3.5} ${y - 3.5}h7v7h-7z`;
    const next = pts[i + 1];
    if (!next || Math.hypot(next[0] - x, next[1] - y) < 60) return;
    for (const t of [0.25, 0.5, 0.75]) {
      const kx = Math.round(x + (next[0] - x) * t);
      const ky = Math.round(y + (next[1] - y) * t);
      knots += `M${kx - 3} ${ky - 3}h7v7h-7z`;
    }
  });
}
add("path", "uv-knot", { d: knots });

/* Packed slivers */
function solid(tile, text) {
  add("path", "uv-solid", { d: path(parse(tile, text)) + "Z" });
}
solid(topLeft, "48,37 690,37 690,40 1128,40 1128,34 1217,34 1217,57 48,57");
solid(topRight, "47,45 58,37 1194,37 1194,60 1185,78 1132,78 1132,97 1164,97 1160,112 1145,118 985,118 990,135 980,142 47,142");
solid(bottomRight, "47,67 1122,67 1122,92 976,92 972,108 955,114 47,118");
strokes(topRight, "uv-scratch", ["60,118 168,118", "298,121 365,121 425,124", "432,121 480,124", "500,124 550,127 600,121", "610,130 690,133 780,130", "690,121 812,121", "928,118 985,118"]);
strokes(bottomRight, "uv-scratch", ["137,83 390,86", "180,103 240,93 330,92", "465,83 860,84", "515,105 600,97 700,92 800,96", "900,84 1005,84", "880,112 950,112"]);

/* 2D cursor */
const [cx, cy] = parse(bottomLeft, "48,1255")[0];
const ring = `M${cx - 12} ${cy}l12 -12 12 12 -12 12z`;
add("path", "", { d: ring, fill: "none", stroke: "#8c2a2a" });
add("path", "", { d: ring, fill: "none", stroke: "#fff", "stroke-dasharray": "6 5" });
add("path", "", { d: `M${cx} ${cy - 24}v18M${cx} ${cy + 7}v18M${cx - 24} ${cy}h18M${cx + 7} ${cy}h18`, fill: "none", stroke: "#ddd", "stroke-dasharray": "1 1" });
```
